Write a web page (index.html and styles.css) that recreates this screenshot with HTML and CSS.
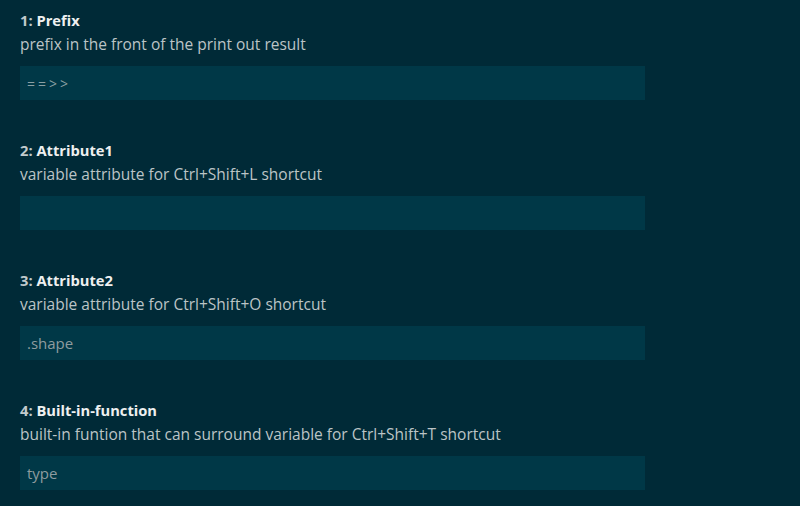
FILE: index.html
```html
<!DOCTYPE html>
<html>
<head>
<meta charset="utf-8">
<link rel="stylesheet" href="styles.css">
</head>
<body>
<div class="settings">
  <div class="setting">
    <div class="title"><span class="num">1: </span><span class="name">Prefix</span></div>
    <div class="desc">prefix in the front of the print out result</div>
    <div class="input"><span class="value mono">==&gt;&gt;</span></div>
  </div>
  <div class="setting">
    <div class="title"><span class="num">2: </span><span class="name">Attribute1</span></div>
    <div class="desc">variable attribute for Ctrl+Shift+L shortcut</div>
    <div class="input"><span class="value"></span></div>
  </div>
  <div class="setting">
    <div class="title"><span class="num">3: </span><span class="name">Attribute2</span></div>
    <div class="desc">variable attribute for Ctrl+Shift+O shortcut</div>
    <div class="input"><span class="value">.shape</span></div>
  </div>
  <div class="setting">
    <div class="title"><span class="num">4: </span><span class="name">Built-in-function</span></div>
    <div class="desc">built-in funtion that can surround variable for Ctrl+Shift+T shortcut</div>
    <div class="input"><span class="value">type</span></div>
  </div>
</div>
</body>
</html>
```
FILE: styles.css
```css
html, body {
  margin: 0;
  padding: 0;
  background: #002a37;
  height: 100%;
  overflow: hidden;
}
.settings {
  display: flex;
  flex-direction: column;
  gap: 40px;
  padding: 10px 0 0 20px;
  font-family: "Open Sans", "Noto Sans", sans-serif;
}
.setting {
  display: flex;
  flex-direction: column;
}
.title {
  font-size: 14.7px;
  line-height: 20px;
  font-weight: bold;
}
.num { color: #c2cacc; }
.name { color: #eef0f0; }
.desc {
  font-size: 15.5px;
  line-height: 20px;
  color: #bcc4c6;
  margin-top: 4px;
}
.input {
  margin-top: 12px;
  width: 625px;
  height: 34px;
  background: #003847;
  display: flex;
  align-items: center;
  padding-left: 7px;
  box-sizing: border-box;
}
.value {
  font-size: 15px;
  color: #8e9c9f;
}
.mono {
  font-size: 14px;
  letter-spacing: 3px;
  color: #8a9fa3;
}
```
